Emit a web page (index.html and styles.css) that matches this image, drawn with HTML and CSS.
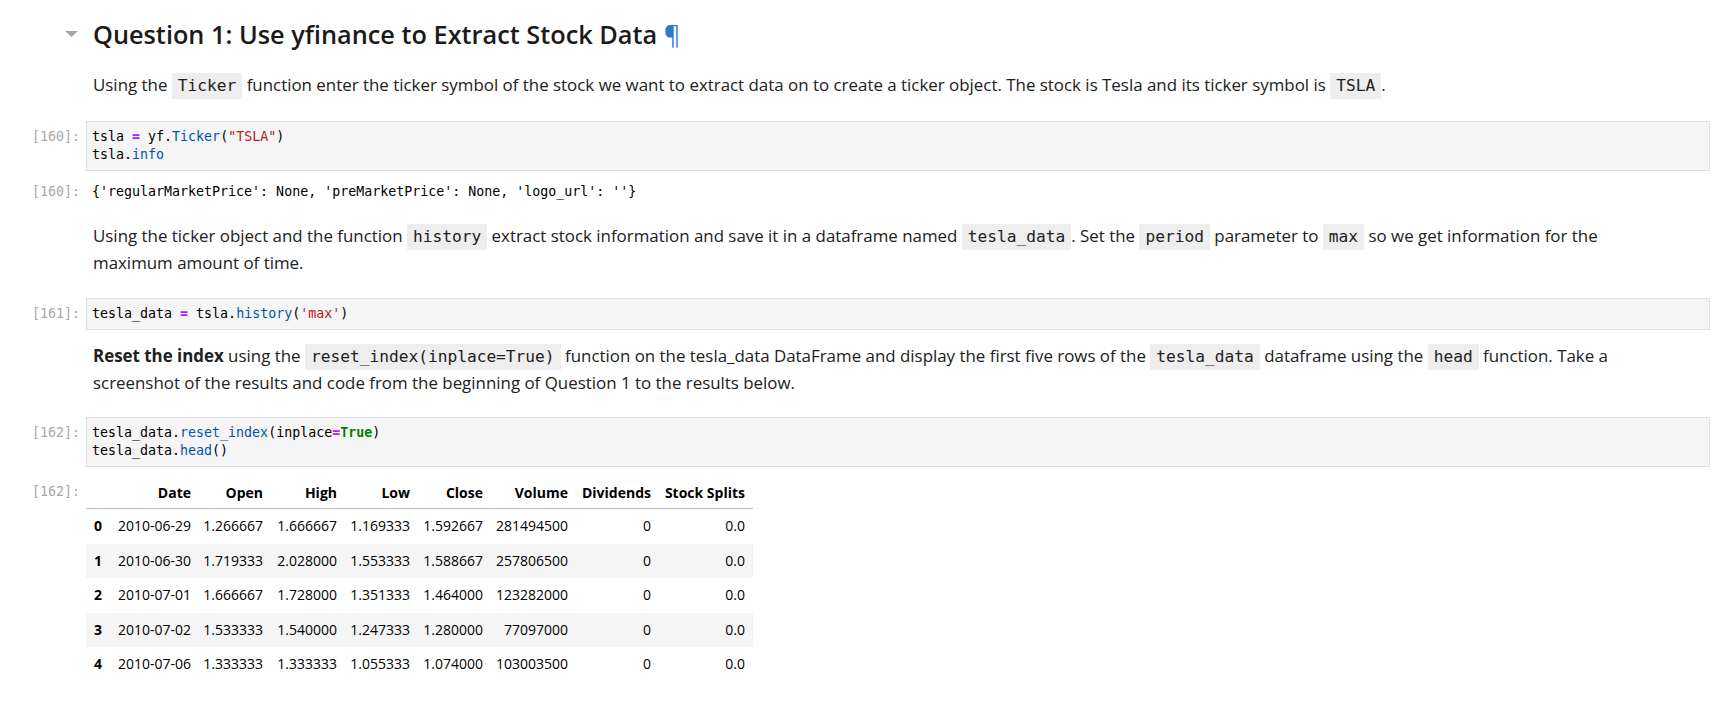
FILE: index.html
```html
<!DOCTYPE html>
<html lang="en">
<head>
<meta charset="utf-8">
<title>Question 1</title>
<link rel="stylesheet" href="styles.css">
</head>
<body>
<main class="notebook">

  <section class="cell md-cell heading-cell">
    <div class="prompt">
      <svg class="caret" width="13" height="6" viewBox="0 0 13 6"><polygon points="0,0 13,0 6.5,6" /></svg>
    </div>
    <div class="md">
      <h2>Question 1: Use yfinance to Extract Stock Data <a class="anchor" href="#">¶</a></h2>
    </div>
  </section>

  <section class="cell md-cell p1">
    <div class="prompt"></div>
    <div class="md">
      <p>Using the <code>Ticker</code> function enter the ticker symbol of the stock we want to extract data on to create a ticker object. The stock is Tesla and its ticker symbol is <code>TSLA</code>.</p>
    </div>
  </section>

  <section class="cell code-cell c1">
    <div class="prompt">[160]:</div>
    <pre class="input">tsla <span class="op">=</span> yf.<span class="prop">Ticker</span>(<span class="str">"TSLA"</span>)
tsla.<span class="prop">info</span></pre>
  </section>

  <section class="cell output-cell o1">
    <div class="prompt">[160]:</div>
    <pre class="output">{'regularMarketPrice': None, 'preMarketPrice': None, 'logo_url': ''}</pre>
  </section>

  <section class="cell md-cell p2">
    <div class="prompt"></div>
    <div class="md">
      <p>Using the ticker object and the function <code>history</code> extract stock information and save it in a dataframe named <code>tesla_data</code>. Set the <code>period</code> parameter to <code>max</code> so we get information for the maximum amount of time.</p>
    </div>
  </section>

  <section class="cell code-cell c2">
    <div class="prompt">[161]:</div>
    <pre class="input">tesla_data <span class="op">=</span> tsla.<span class="prop">history</span>(<span class="str">'max'</span>)</pre>
  </section>

  <section class="cell md-cell p3">
    <div class="prompt"></div>
    <div class="md">
      <p><strong>Reset the index</strong> using the <code>reset_index(inplace=True)</code> function on the tesla_data DataFrame and display the first five rows of the <code>tesla_data</code> dataframe using the <code>head</code> function. Take a screenshot of the results and code from the beginning of Question 1 to the results below.</p>
    </div>
  </section>

  <section class="cell code-cell c3">
    <div class="prompt">[162]:</div>
    <pre class="input">tesla_data.<span class="prop">reset_index</span>(inplace<span class="op">=</span><span class="kw">True</span>)
tesla_data.<span class="prop">head</span>()</pre>
  </section>

  <section class="cell output-cell o3">
    <div class="prompt">[162]:</div>
    <div class="output-html">
      <table class="dataframe">
        <colgroup>
          <col class="w-idx"><col class="w-date"><col class="w-open"><col class="w-high"><col class="w-low"><col class="w-close"><col class="w-vol"><col class="w-div"><col class="w-split">
        </colgroup>
        <thead>
          <tr><th></th><th>Date</th><th>Open</th><th>High</th><th>Low</th><th>Close</th><th>Volume</th><th>Dividends</th><th>Stock Splits</th></tr>
        </thead>
        <tbody>
          <tr><th>0</th><td>2010-06-29</td><td>1.266667</td><td>1.666667</td><td>1.169333</td><td>1.592667</td><td>281494500</td><td>0</td><td>0.0</td></tr>
          <tr><th>1</th><td>2010-06-30</td><td>1.719333</td><td>2.028000</td><td>1.553333</td><td>1.588667</td><td>257806500</td><td>0</td><td>0.0</td></tr>
          <tr><th>2</th><td>2010-07-01</td><td>1.666667</td><td>1.728000</td><td>1.351333</td><td>1.464000</td><td>123282000</td><td>0</td><td>0.0</td></tr>
          <tr><th>3</th><td>2010-07-02</td><td>1.533333</td><td>1.540000</td><td>1.247333</td><td>1.280000</td><td>77097000</td><td>0</td><td>0.0</td></tr>
          <tr><th>4</th><td>2010-07-06</td><td>1.333333</td><td>1.333333</td><td>1.055333</td><td>1.074000</td><td>103003500</td><td>0</td><td>0.0</td></tr>
        </tbody>
      </table>
    </div>
  </section>

</main>
</body>
</html>
```

FILE: styles.css
```css
* { box-sizing: border-box; }

html, body {
  margin: 0;
  background: #ffffff;
}

body {
  font-family: "Open Sans", "Noto Sans", sans-serif;
  color: #212121;
}

.notebook {
  padding: 17px 12px 0 0;
}

.cell {
  display: flex;
  align-items: flex-start;
}

.prompt {
  flex: 0 0 86px;
  width: 86px;
  padding-right: 6px;
  text-align: right;
  font-family: "DejaVu Sans Mono", "Liberation Mono", monospace;
  font-size: 13.3px;
  line-height: 18px;
  color: #a8a8a8;
}

/* markdown */
.md {
  flex: 1;
  padding-left: 7px;
  padding-right: 60px;
}

.md h2 {
  margin: 0;
  font-size: 25.3px;
  font-weight: 600;
  line-height: 34px;
  color: #1a1a1a;
}

.anchor {
  color: #2a7bd0;
  text-decoration: none;
  font-weight: 400;
}

.heading-cell .prompt {
  display: flex;
  justify-content: flex-end;
  padding-right: 8px;
  padding-top: 14px;
}

.caret { fill: #a7a7a7; display: block; }

.md p {
  margin: 0;
  font-size: 16.9px;
  line-height: 27.5px;
}

.md strong { font-weight: 700; }

.md code {
  font-family: "DejaVu Sans Mono", "Liberation Mono", monospace;
  font-size: 16.2px;
  line-height: 1;
  background: #eeeeee;
  padding: 3px 6px 4px;
  color: #212121;
}

.p1 { margin-top: 20px; }
.p2 { margin-top: 21px; }
.p3 { margin-top: 12px; }

/* code cells */
.code-cell .prompt { padding-top: 7px; }

.input {
  flex: 1;
  margin: 0;
  background: #f5f5f5;
  border: 1px solid #e0e0e0;
  padding: 6px 5px;
  font-family: "DejaVu Sans Mono", "Liberation Mono", monospace;
  font-size: 13.3px;
  line-height: 18px;
  color: #000000;
}

.c1 { margin-top: 22px; }
.c2 { margin-top: 21px; }
.c3 { margin-top: 20px; }

.op { color: #aa22ff; font-weight: 700; }
.prop { color: #0055aa; }
.str { color: #ba2121; }
.kw { color: #008000; font-weight: 700; }

/* outputs */
.output {
  flex: 1;
  margin: 0;
  padding-left: 6px;
  font-family: "DejaVu Sans Mono", "Liberation Mono", monospace;
  font-size: 13.3px;
  line-height: 18px;
  color: #000000;
}

.o1 { margin-top: 12px; }
.o3 { margin-top: 10px; }
.o3 .prompt { padding-top: 6px; }

.output-html { flex: 1; }

.dataframe {
  border-collapse: collapse;
  table-layout: fixed;
  width: 667px;
  font-family: "Open Sans", "Noto Sans", sans-serif;
  font-size: 14px;
  color: #000000;
}

.w-idx { width: 24px; }
.w-date { width: 89px; }
.w-open { width: 72px; }
.w-high { width: 74px; }
.w-low { width: 73px; }
.w-close { width: 73px; }
.w-vol { width: 85px; }
.w-div { width: 83px; }
.w-split { width: 94px; }

.dataframe th,
.dataframe td {
  text-align: right;
  padding: 7px 8px 7px 3px;
  line-height: 20.5px;
  white-space: nowrap;
}

.dataframe thead th {
  font-size: 14px;
  font-weight: 700;
  padding: 6px 8px 5px 3px;
  border-bottom: 1px solid #bdbdbd;
}

.dataframe tbody th { font-weight: 700; }

.dataframe tbody tr:nth-child(even) { background: #f5f5f5; }
```
